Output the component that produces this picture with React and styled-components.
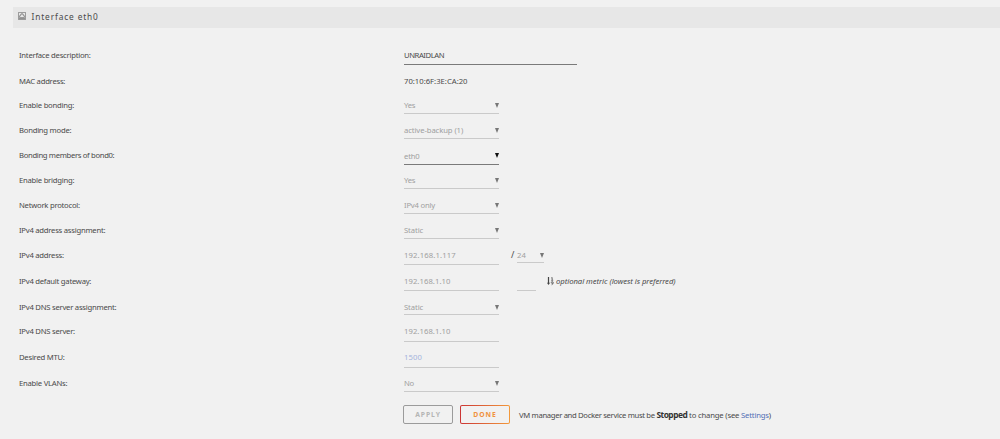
import React from "react";
import styled, { createGlobalStyle, css } from "styled-components";

const Colors = {
  page: "#f1f1f1",
  bar: "#e7e7e7",
  text: "#4a4a4a",
  muted: "#a0a0a0",
  line: "#cacaca",
  strong: "#7a7a7a",
  link: "#526fb5",
};

const GlobalStyle = createGlobalStyle`
  body {
    margin: 0;
    background-color: ${Colors.page};
    color: ${Colors.text};
    font-family: "Noto Sans", sans-serif;
    font-size: 7.7px;
  }

  * {
    box-sizing: border-box;
  }
`;

const Page = styled.main`
  height: 439px;
  padding: 7px 0 0 13px;
  overflow: hidden;
`;

const TitleBar = styled.header`
  display: flex;
  align-items: flex-start;
  height: 21px;
  padding: 5px 0 0 5px;
  background-color: ${Colors.bar};
`;

const Title = styled.h1`
  margin: 0 0 0 5.5px;
  font-size: 8.3px;
  font-weight: 400;
  line-height: 10px;
  letter-spacing: 0.88px;
`;

const Form = styled.form`
  padding: 15px 0 0 6px;
`;

const Row = styled.div`
  display: grid;
  grid-template-columns: 385px 1fr;
  height: ${(p) => p.$height}px;
  line-height: 24px;
`;

const Label = styled.label`
  white-space: nowrap;
  letter-spacing: ${(p) => p.$spacing || -0.25}px;
`;

const Controls = styled.div`
  display: flex;
  align-items: flex-start;
  white-space: nowrap;
`;

const Field = styled.div`
  display: flex;
  justify-content: space-between;
  width: ${(p) => p.$width || 95}px;
  height: ${(p) => p.$height || 21}px;
  padding-top: ${(p) => p.$top || 0}px;
  color: ${(p) => p.$color || Colors.muted};
  border-bottom: 1px solid ${(p) => (p.$active ? Colors.strong : Colors.line)};
  letter-spacing: ${(p) => p.$spacing || 0}px;
`;

const Arrow = styled.svg`
  width: 4px;
  height: 5px;
  margin: ${(p) => (p.$dark ? 9 : 10)}px 0 0;
  fill: ${(p) => (p.$dark ? "#111111" : "#777777")};
`;

const Slash = styled.span`
  margin: 0 2px 0 12px;
  width: 4px;
  font-size: 9px;
`;

const Metric = styled.em`
  display: flex;
  margin-left: 11px;
  letter-spacing: -0.04px;
`;

const SortIcon = styled.svg`
  width: 7px;
  height: 9px;
  margin: 8px 2px 0 0;
`;

const Button = styled.button`
  width: 50px;
  height: 19px;
  margin: 0 7px 0 0;
  padding: 0;
  border: 1px solid #9b9b9b;
  border-radius: 2px;
  background: transparent;
  color: #b5b5b5;
  font-family: inherit;
  font-size: 6.8px;
  font-weight: 700;
  line-height: 17px;
  letter-spacing: 0.95px;

  ${(p) =>
    p.$primary &&
    css`
      border-color: transparent;
      background:
        linear-gradient(${Colors.page}, ${Colors.page}) padding-box,
        linear-gradient(90deg, #cb3434, #f39a3c) border-box;
      color: #f0923f;
    `}
`;

const Note = styled.p`
  margin: 0 0 0 2px;
  line-height: 19px;
  letter-spacing: -0.18px;

  strong {
    color: #333333;
    font-size: 8.4px;
    letter-spacing: -0.5px;
  }

  a {
    color: ${Colors.link};
    text-decoration: none;
  }
`;

const NoteLead = styled.span`
  letter-spacing: -0.34px;
`;

const Actions = styled.div`
  display: flex;
  padding: 9px 0 0 384px;
  white-space: nowrap;
`;

const rows = [
  { label: "Interface description:", height: 26, value: "UNRAIDLAN", width: 173, line: 22, active: true, color: Colors.text, spacing: -0.45 },
  { label: "MAC address:", height: 24, value: "70:10:6F:3E:CA:20", plain: true },
  { label: "Enable bonding:", height: 25, value: "Yes", select: true, spacing: -0.3 },
  { label: "Bonding mode:", height: 25, value: "active-backup (1)", select: true, spacing: -0.1 },
  { label: "Bonding members of bond0:", height: 25, value: "eth0", select: true, line: 22, top: 1, active: true, dark: true, spacing: -0.2, labelSpacing: -0.34 },
  { label: "Enable bridging:", height: 25, value: "Yes", select: true, spacing: -0.3 },
  { label: "Network protocol:", height: 25, value: "IPv4 only", select: true, spacing: -0.2 },
  { label: "IPv4 address assignment:", height: 25, value: "Static", select: true, spacing: -0.1 },
  { label: "IPv4 address:", height: 26, value: "192.168.1.117", line: 22, extra: "mask", spacing: 0.12 },
  { label: "IPv4 default gateway:", height: 26, value: "192.168.1.10", line: 22, extra: "metric", spacing: 0.06 },
  { label: "IPv4 DNS server assignment:", height: 24, value: "Static", select: true, line: 20, spacing: -0.1 },
  { label: "IPv4 DNS server:", height: 26, value: "192.168.1.10", line: 23, spacing: 0.06 },
  { label: "Desired MTU:", height: 26, value: "1500", line: 23, color: "#a5b4dd", spacing: 0.12 },
  { label: "Enable VLANs:", height: 25, value: "No", select: true, spacing: -0.3 },
];

function DownArrow({ dark }) {
  return (
    <Arrow viewBox="0 0 4 5" $dark={dark}>
      <path d="M0 0h4L2 5z" />
    </Arrow>
  );
}

function EthernetIcon() {
  return (
    <svg width="8" height="8" viewBox="0 0 8 8" fill="none" stroke="#777" strokeWidth=".75">
      <path d="M.4.4h7.2v7.2H.4z" />
      <path d="M1.6 5.6V3.7h1V2.5h.7v-.8h1.4v.8h.7v1.2h1v1.9z" />
      <path d="M1 6.5h6" />
    </svg>
  );
}

function Extra({ type }) {
  if (type === "mask") {
    return (
      <>
        <Slash>/</Slash>
        <Field $width={27} $height={20} $spacing={0.1}>
          24
          <DownArrow />
        </Field>
      </>
    );
  }
  return (
    <>
      <Slash />
      <Field $width={19} $height={22} />
      <Metric>
        <SortIcon viewBox="0 0 7 9" fill="none" stroke="#444">
          <path d="M1.5 0v6.5" strokeWidth="1.2" />
          <path d="M0 5.7h3L1.5 8z" fill="#444" stroke="none" />
          <path d="M4.2 1l1-.5v2.7M4.2 3.3h2" strokeWidth=".7" />
          <circle cx="5.2" cy="5.5" r=".9" strokeWidth=".7" />
          <path d="M6.1 5.5c0 1.500-.4 2.100-1.500 2.300" strokeWidth=".7" />
        </SortIcon>
        optional metric (lowest is preferred)
      </Metric>
    </>
  );
}

function SettingRow({ row }) {
  return (
    <Row $height={row.height}>
      <Label $spacing={row.labelSpacing}>{row.label}</Label>
      <Controls>
        {row.plain ? (
          <span>{row.value}</span>
        ) : (
          <Field
            $width={row.width}
            $height={row.line}
            $top={row.top}
            $active={row.active}
            $color={row.color}
            $spacing={row.spacing}
          >
            {row.value}
            {row.select && <DownArrow dark={row.dark} />}
          </Field>
        )}
        {row.extra && <Extra type={row.extra} />}
      </Controls>
    </Row>
  );
}

export default function App() {
  return (
    <>
      <GlobalStyle />
      <Page>
        <TitleBar>
          <EthernetIcon />
          <Title>Interface eth0</Title>
        </TitleBar>
        <Form>
          {rows.map((row) => (
            <SettingRow key={row.label} row={row} />
          ))}
          <Actions>
            <Button type="button">APPLY</Button>
            <Button type="button" $primary>
              DONE
            </Button>
            <Note>
              <NoteLead>VM manager and Docker service must be </NoteLead>
              <strong>Stopped</strong> to change (see <a href="#settings">Settings</a>)
            </Note>
          </Actions>
        </Form>
      </Page>
    </>
  );
}
